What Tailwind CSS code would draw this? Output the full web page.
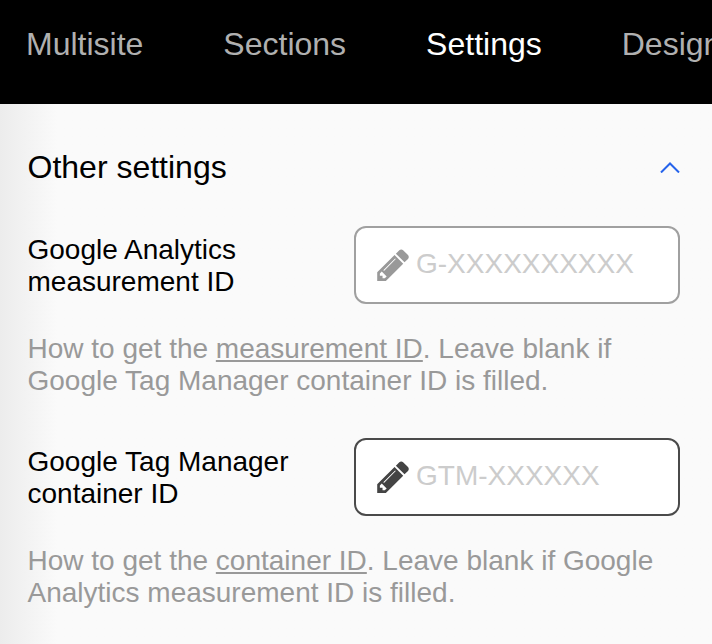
<!DOCTYPE html>
<html lang="en">
<head>
    <meta charset="UTF-8">
    <title>Other settings</title>
    <script src="https://cdn.jsdelivr.net/npm/@tailwindcss/browser@4"></script>
</head>
<body class="w-[712px] h-[644px] overflow-hidden bg-[#fafafa] font-['Liberation_Sans',Arial,sans-serif]">

    <nav class="h-[104px] bg-black flex items-center gap-20 pl-[26px] pb-[16px] text-[32px] text-[#b0b0b0] whitespace-nowrap overflow-hidden">
        <span>Multisite</span>
        <span>Sections</span>
        <span class="text-white">Settings</span>
        <span>Design</span>
    </nav>

    <main class="h-[540px] pt-[47px] pl-[27.5px] pr-8 bg-gradient-to-r from-[#ececec] from-0% to-[#fafafa] to-[8%]">
        <div class="flex justify-between items-center h-8 mb-[43px]">
            <h2 class="text-[32px] leading-8 text-black">Other settings</h2>
            <svg class="w-[20px] h-[11px]" viewBox="0 0 20 11" fill="none" stroke="#2563eb" stroke-width="2"><path d="M1 10.5 L10 1.5 L19 10.5"/></svg>
        </div>

        <div class="flex justify-between items-center">
            <label class="text-[28px] leading-8 text-black pt-[2px]">Google Analytics<br>measurement ID</label>
            <div class="w-[326px] h-[78px] bg-white border-2 border-[#a0a0a0] rounded-xl flex items-center pl-[21px] gap-[7px]">
                <svg class="w-8 h-8 shrink-0" viewBox="128 128 1516 1536" fill="#999999"><path d="M491 1536l91-91-235-235-91 91v107h128v128h107zm523-928q0-22-22-22-10 0-17 7l-542 542q-7 7-7 17 0 22 22 22 10 0 17-7l542-542q7-7 7-17zm-54-192l416 416-832 832h-416v-416zm683 96q0 53-37 90l-166 166-416-416 166-165q36-38 90-38 53 0 91 38l235 234q37 39 37 91z"/></svg>
                <span class="text-[28px] text-[#cccccc] -mt-[2px]">G-XXXXXXXXXX</span>
            </div>
        </div>
        <p class="mt-[29px] mb-[41px] text-[28px] leading-8 text-[#999999]">How to get the <a class="underline">measurement ID</a>. Leave blank if<br>Google Tag Manager container ID is filled.</p>

        <div class="flex justify-between items-center">
            <label class="text-[28px] leading-8 text-black pt-[2px]">Google Tag Manager<br>container ID</label>
            <div class="w-[326px] h-[78px] bg-white border-2 border-[#4a4a4a] rounded-xl flex items-center pl-[21px] gap-[7px]">
                <svg class="w-8 h-8 shrink-0" viewBox="128 128 1516 1536" fill="#444444"><path d="M491 1536l91-91-235-235-91 91v107h128v128h107zm523-928q0-22-22-22-10 0-17 7l-542 542q-7 7-7 17 0 22 22 22 10 0 17-7l542-542q7-7 7-17zm-54-192l416 416-832 832h-416v-416zm683 96q0 53-37 90l-166 166-416-416 166-165q36-38 90-38 53 0 91 38l235 234q37 39 37 91z"/></svg>
                <span class="text-[28px] text-[#cccccc] -mt-[2px]">GTM-XXXXXX</span>
            </div>
        </div>
        <p class="mt-[29px] text-[28px] leading-8 text-[#999999]">How to get the <a class="underline">container ID</a>. Leave blank if Google<br>Analytics measurement ID is filled.</p>
    </main>

</body>
</html>
